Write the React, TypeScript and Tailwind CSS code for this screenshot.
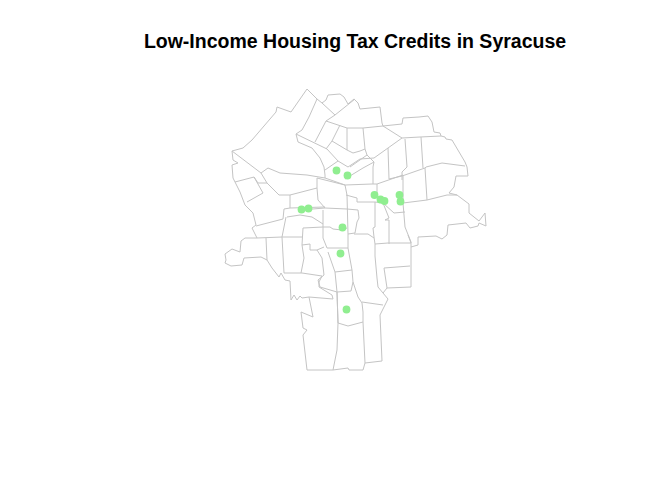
const TRACTS: string[] = [
  // outer boundary, clockwise from the top
  "307,89 317,99 322,103 326,100 328,95 340,94 344,97 348,104 354,99 358,103 360,109 380,107 382,123 383,126 402,124 403,118 419,117 428,116 432,122 434,132 440,133 441,136 445,137 446,139 452,140 465,162 467,167 468,176 456,176 454,187 449,193 457,195 469,204 469,213 479,221 485,213 486,226 479,223 478,226 470,228 466,223 448,225 447,235 442,239 436,236 418,237 418,245 411,247 411,287 387,288 383,293 388,299 380,315 382,361 365,363 363,370 349,370 348,368 333,370 307,370 303,335 307,330 303,328 301,312 313,317 309,297 302,298 300,296 297,300 294,295 291,300 290,281 285,280 281,273 279,277 272,268 267,260 261,257 244,258 242,265 231,266 225,263 226,260 225,254 232,249 240,252 241,241 245,238 257,238 252,228 256,225 253,213 245,205 240,192 233,178 232,165 238,163 233,160 232,151 243,148 252,140 276,112 277,107 291,112 307,89",
  // north side
  "317,99 309,117 302,130 296,134 298,142 312,148 320,158 324,167 325,175 325,178",
  "322,103 335,115 355,99",
  "335,115 326,121 315,142",
  "296,134 327,149 338,161 325,170",
  "326,121 347,128 363,128 383,126 402,138 420,137 441,136",
  "340,125 332,141 326,149",
  "332,141 347,150 347,128",
  "347,150 353,153 360,151 365,149",
  "338,161 348,167 360,159 374,158",
  "363,128 365,149 367,155 374,162 373,167 373,184",
  "402,138 388,148 374,158",
  "367,155 350,167",
  "374,162 363,168 345,179",
  "388,148 389,179",
  "405,139 407,167 402,172 402,180",
  "389,179 402,176 425,168 426,167 442,163 465,166",
  "421,137 423,168",
  "425,168 427,200",
  // east side
  "345,185 372,184 377,184 403,175",
  "377,184 377,193",
  "403,175 403,203 405,227 411,242 411,247",
  "403,203 427,200 447,195 457,195",
  "346,195 357,198 357,202 375,202 383,203 394,213 405,212",
  "375,202 375,227 373,228 374,237 375,244 375,256 377,278 378,287 383,293",
  "375,244 388,243 411,243",
  "408,235 411,243",
  "383,203 389,218 385,220 389,220 389,235 389,244",
  "354,234 368,234 374,238",
  "384,268 410,266",
  "384,268 387,288",
  "362,302 383,305",
  // centre
  "317,178 345,185 347,195 348,234 355,233 357,222 359,218 358,210 347,209 325,208 318,200 317,188 290,195",
  "300,210 325,208",
  "323,210 323,227 323,238 327,248 348,248 348,234",
  "323,227 330,227 333,229 342,230 347,228",
  "348,248 352,270 353,282 358,297 362,303 363,312 363,322 348,326 338,323 337,292",
  "328,252 335,272 337,292 351,291 353,282",
  "335,272 352,270",
  "303,228 323,227",
  "287,217 300,215 312,217 323,224",
  // west side
  "232,151 261,173 268,168 280,173 307,175 325,178 345,185",
  "261,173 267,183 279,195 290,195",
  "235,182 254,177 263,193 247,202",
  "254,177 258,183 267,183",
  "317,178 317,188",
  "290,195 290,208 325,207",
  "290,208 284,209 283,219 256,226",
  "286,217 282,237 284,273 302,273 322,276 319,282 319,287 332,295 333,299 309,297",
  "257,238 282,237 302,237",
  "303,228 302,245 304,258 301,273",
  "266,238 267,260",
  "302,245 310,244 310,250 317,250 324,247",
  "317,250 322,258 324,275 318,280 320,287 337,292",
  // south side
  "337,292 338,323 337,350 333,370",
  "363,322 365,363",
];

const SITES: [number, number][] = [
  [336.5, 170.5], [347.5, 175.5], [374.5, 195], [380.5, 199.5], [384.5, 201], [399.5, 195],
  [400.5, 201.5], [301.5, 209.5], [308.5, 208.5], [342.5, 227.5], [340.5, 253.5], [346.5, 309.5],
];

export default function App() {
  return (
    <div className="w-[672px] h-[480px] bg-white overflow-hidden">
      <h1 className="h-[60px] pt-[30px] pl-[38px] text-center text-[19.5px] leading-[22px] font-bold text-black font-['Liberation_Sans',Arial,sans-serif]">
        Low-Income Housing Tax Credits in Syracuse
      </h1>
      <svg width="672" height="420" viewBox="0 60 672 420" className="block">
        {TRACTS.map((pts, i) => (
          <polyline key={i} points={pts} fill="none" stroke="#c4c4c4" strokeWidth="1" strokeLinejoin="round" />
        ))}
        {SITES.map(([x, y], i) => (
          <circle key={i} cx={x} cy={y} r="3.9" fill="#90ee90" />
        ))}
      </svg>
    </div>
  );
}
